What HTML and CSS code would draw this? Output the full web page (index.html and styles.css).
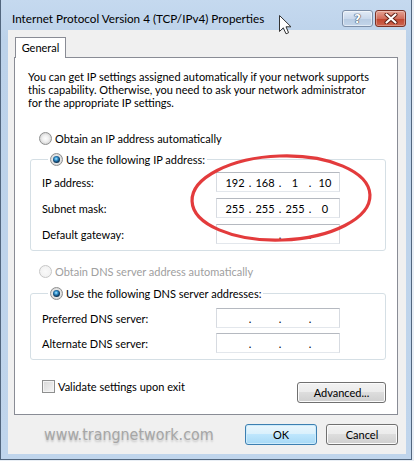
FILE: index.html
```html
<!DOCTYPE html>
<html lang="en">
<head>
    <meta charset="UTF-8">
    <meta name="viewport" content="width=device-width, initial-scale=1.0">
    <title>Internet Protocol Version 4 (TCP/IPv4) Properties</title>
    <link rel="stylesheet" href="styles.css">
</head>
<body>
    <div class="window">
        <div class="titlebar">
            <span class="title">Internet Protocol Version 4 (TCP/IPv4) Properties</span>
            <div class="caption-buttons">
                <span class="cap-btn help">?</span>
                <span class="cap-btn close">
                    <svg width="14" height="11" viewBox="0 0 14 11">
                        <path d="M2.5 1.5 L11.5 9.5 M11.5 1.5 L2.5 9.5" stroke="#5a1c12" stroke-width="4" stroke-linecap="round"/>
                        <path d="M2.5 1.5 L11.5 9.5 M11.5 1.5 L2.5 9.5" stroke="#fff" stroke-width="2.2" stroke-linecap="round"/>
                    </svg>
                </span>
            </div>
            <!-- mouse pointer left in the screenshot -->
            <svg class="cursor" width="13" height="20" viewBox="0 0 13 20">
                <path d="M0.5 0.5 L0.5 16.5 L4.3 12.8 L7 18.8 L9.6 17.7 L7 11.8 L12 11.8 Z" fill="#fff" stroke="#333" stroke-width="1" stroke-linejoin="round"/>
            </svg>
        </div>

        <div class="client">
            <div class="tabs">
                <div class="tab">General</div>
            </div>

            <div class="panel">
                <p class="intro">You can get IP settings assigned automatically if your network supports<br>this capability. Otherwise, you need to ask your network administrator<br>for the appropriate IP settings.</p>

                <label class="option"><span class="radio"></span>Obtain an IP address automatically</label>

                <fieldset class="group group-ip">
                    <legend><label class="option"><span class="radio checked"></span>Use the following IP address:</label></legend>
                    <div class="field-row">
                        <span class="field-label">IP address:</span>
                        <div class="ipbox"><span>192</span><i>.</i><span>168</span><i>.</i><span>1</span><i>.</i><span>10</span></div>
                    </div>
                    <div class="field-row">
                        <span class="field-label">Subnet mask:</span>
                        <div class="ipbox"><span>255</span><i>.</i><span>255</span><i>.</i><span>255</span><i>.</i><span>0</span></div>
                    </div>
                    <div class="field-row">
                        <span class="field-label">Default gateway:</span>
                        <div class="ipbox"><span></span><i>.</i><span></span><i>.</i><span></span><i>.</i><span></span></div>
                    </div>
                </fieldset>

                <label class="option disabled"><span class="radio"></span>Obtain DNS server address automatically</label>

                <fieldset class="group group-dns">
                    <legend><label class="option"><span class="radio checked"></span>Use the following DNS server addresses:</label></legend>
                    <div class="field-row">
                        <span class="field-label">Preferred DNS server:</span>
                        <div class="ipbox"><span></span><i>.</i><span></span><i>.</i><span></span><i>.</i><span></span></div>
                    </div>
                    <div class="field-row">
                        <span class="field-label">Alternate DNS server:</span>
                        <div class="ipbox"><span></span><i>.</i><span></span><i>.</i><span></span><i>.</i><span></span></div>
                    </div>
                </fieldset>

                <div class="panel-bottom">
                    <label class="check"><span class="checkbox"></span>Validate settings upon exit</label>
                    <span class="btn advanced">Advanced...</span>
                </div>
            </div>

            <div class="footer">
                <span class="watermark">www.trangnetwork.com</span>
                <span class="btn default">OK</span>
                <span class="btn">Cancel</span>
            </div>
        </div>

        <!-- red mark drawn over the address fields -->
        <svg class="highlight" width="200" height="104" viewBox="0 0 200 104">
            <ellipse cx="100" cy="52" rx="89" ry="42" fill="none" stroke="#e33b3c" stroke-width="3.2" transform="rotate(-2 100 52)"/>
        </svg>
    </div>
</body>
</html>
```

FILE: styles.css
```css
body {
    margin: 0;
    background-color: #e8eef5;
    font-family: Lato, "Noto Sans", sans-serif;
    font-size: 11px;
    color: #000;
}
.window {
    position: relative;
    width: 412px;
    height: 460px;
    box-sizing: border-box;
    background: linear-gradient(#c5d9ef, #bcd2ea 40px, #c0d5ec);
    border: 1px solid #52667e;
    border-top: none;
    display: flex;
    flex-direction: column;
}
.titlebar {
    height: 30px;
    display: flex;
    align-items: flex-start;
    position: relative;
}
.title {
    font-size: 11.7px;
    line-height: 16px;
    margin: 10px 0 0 11px;
    white-space: nowrap;
}
.caption-buttons {
    display: flex;
    gap: 2px;
    margin: 10px 5px 0 auto;
}
.cap-btn {
    width: 31px;
    height: 17px;
    box-sizing: border-box;
    border-radius: 3px;
    display: flex;
    align-items: center;
    justify-content: center;
}
.help {
    border: 1px solid #7d8fa8;
    background: linear-gradient(#e2ebf6, #cad9ec 50%, #b7cbe2 51%, #c3d5ea);
    box-shadow: inset 0 0 0 1px rgba(255,255,255,0.5);
    color: #fff;
    font-family: "DejaVu Sans", sans-serif;
    font-weight: bold;
    font-size: 12px;
    text-shadow: 0 0 1px #3a4a60, 0 0 1px #3a4a60, 0 0 1px #3a4a60;
}
.close {
    border: 1px solid #7a3226;
    background: linear-gradient(#e6a394, #d16d5b 50%, #c0442e 51%, #cd6550);
    box-shadow: inset 0 0 0 1px rgba(255,255,255,0.3);
}
.cursor {
    position: absolute;
    left: 278px;
    top: 15px;
}
.client {
    flex: 1;
    margin: 0 5px 5px 7px;
    background-color: #f0f0f0;
}
.tabs {
    display: flex;
    padding: 7px 0 0 7px;
}
.tab {
    width: 51px;
    height: 21px;
    box-sizing: border-box;
    border: 1px solid #898c95;
    border-bottom: none;
    background-color: #fff;
    margin-bottom: -1px;
    position: relative;
    z-index: 1;
    text-align: center;
    line-height: 19px;
}
.panel {
    margin: 0 8px 0 6px;
    height: 358px;
    box-sizing: border-box;
    border: 1px solid #898c95;
    background-color: #fff;
    padding: 12px 11px 0 13px;
}
.intro {
    margin: 0;
    line-height: 13px;
    white-space: nowrap;
}
.option {
    display: flex;
    align-items: center;
    height: 20px;
    white-space: nowrap;
}
.panel > .option {
    margin: 19px 0 1px 11px;
}
.panel > .option.disabled {
    margin-top: 10px;
    margin-bottom: 2px;
    color: #a0a0a0;
}
.radio {
    width: 13px;
    height: 13px;
    box-sizing: border-box;
    border-radius: 50%;
    border: 1px solid #8e8f8f;
    background: radial-gradient(circle at 50% 50%, #fdfdfd 0, #f0f0f0 3px, #d3d3d3 6px);
    margin-right: 3px;
    display: flex;
    align-items: center;
    justify-content: center;
}
.radio.checked::after {
    content: "";
    width: 7px;
    height: 7px;
    border-radius: 50%;
    background: radial-gradient(circle at 45% 40%, #b4ecff 0, #3b9ad5 1.5px, #15507e 3px, #0b2f4d 4px);
}
.disabled .radio {
    border-color: #c7c7c7;
    background: radial-gradient(circle at 50% 50%, #fafafa 0, #f1f1f1 6px);
}
.group {
    margin: 0 0 0 2px;
    padding: 3px 0 6px 11px;
    border: 1px solid #d5dfe5;
    border-radius: 3px;
    display: flex;
    flex-direction: column;
    gap: 6px;
}
.group legend {
    padding: 0 2px;
    margin-left: 6px;
}
.group-dns {
    padding-top: 5px;
    padding-bottom: 6px;
    gap: 5px;
}
.field-row {
    display: flex;
    align-items: center;
    height: 20px;
}
.field-label {
    width: 174px;
}
.ipbox {
    width: 124px;
    height: 20px;
    box-sizing: border-box;
    border: 1px solid;
    border-color: #b5b9c0 #d7dbe1 #e3e7ec #d7dbe1;
    padding-left: 5px;
    display: flex;
    align-items: center;
}
.ipbox span {
    width: 26px;
    text-align: center;
}
.ipbox i {
    font-style: normal;
    width: 4px;
    text-align: center;
}
.panel-bottom {
    display: flex;
    align-items: flex-start;
    margin-top: 16px;
}
.check {
    display: flex;
    align-items: center;
    height: 20px;
    margin-left: 14px;
}
.checkbox {
    width: 13px;
    height: 13px;
    box-sizing: border-box;
    border: 1px solid #8e8f8f;
    background: linear-gradient(135deg, #d7d7d7, #f6f6f6);
    box-shadow: inset 0 0 0 1px #f4f4f4;
    margin-right: 3px;
}
.btn {
    height: 21px;
    box-sizing: border-box;
    border: 1px solid #707070;
    border-radius: 3px;
    background: linear-gradient(#f2f2f2, #ebebeb 49%, #dddddd 50%, #cfcfcf);
    box-shadow: inset 0 0 0 1px #fbfbfb;
    display: flex;
    align-items: center;
    justify-content: center;
    width: 72px;
}
.advanced {
    width: 89px;
    margin: 6px 0 0 auto;
}
.footer {
    display: flex;
    align-items: flex-start;
    gap: 9px;
    padding: 9px 8px 0 36px;
}
.btn.default {
    border-color: #3c7fb1;
    background: linear-gradient(#eaf6fd, #d9f0fc 49%, #bee6fd 50%, #a7d9f5);
    box-shadow: inset 0 0 0 1px #cdebfb;
}
.watermark {
    margin-right: auto;
    font-family: "DejaVu Sans Condensed", "DejaVu Sans", sans-serif;
    font-stretch: condensed;
    font-size: 15.9px;
    line-height: 21px;
    color: #a6a6a6;
    text-shadow: 0 2px 2px rgba(0,0,0,0.18);
}
.highlight {
    position: absolute;
    left: 180px;
    top: 146px;
}
```
